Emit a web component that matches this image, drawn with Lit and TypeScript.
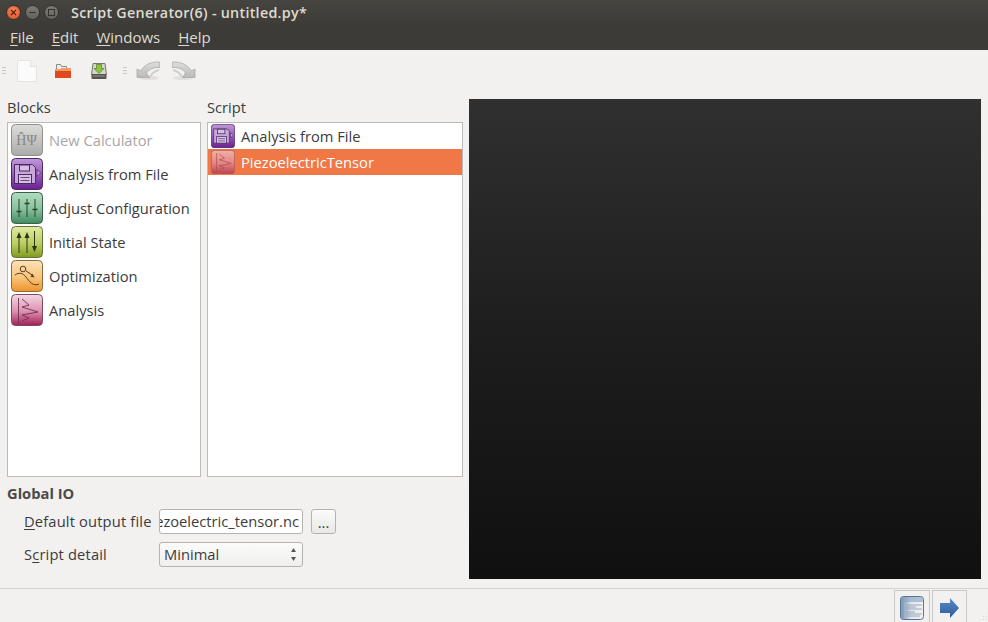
import { LitElement, html, css, svg } from "lit";
import { customElement } from "lit/decorators.js";

type Kind = "calc" | "file" | "adjust" | "init" | "opt" | "analysis";

const glyphs: Record<Kind, unknown> = {
  calc: svg`<text x="15.500" y="21" text-anchor="middle" class="calc-text">ĤΨ</text>`,
  file: svg`<g fill="none" stroke="#4b2a63" stroke-width="1"><path d="M3.500 6.500h18l3 3v16h-21z" fill="#c7a6dc"/><rect x="8.500" y="7" width="10" height="6" fill="#d6c0e4"/><rect x="7.500" y="16.500" width="13" height="9" fill="#d6c0e4"/><path d="M9.500 19.500h9M9.500 22.500h9" stroke-width=".8"/><path d="M26 11.500l3.500 3.500-3.500 3.500z" fill="#c8a8dc" stroke-width=".8"/></g>`,
  adjust: svg`<g fill="none" stroke="#24432f" stroke-width="1"><path d="M8 7v18M16 7v18M24 7v18"/><path d="M5.500 19.500h5M13.500 11.500h5M21.500 17.500h5" stroke-width="1.600"/></g>`,
  init: svg`<g fill="#2a3410" stroke="#2a3410" stroke-width="1"><path d="M8 27V10M16 27V10M23.500 5v17" fill="none"/><path d="M8 6l-2.500 6h5zM16 6l-2.500 6h5zM23.500 26l-2.500-6h5z" stroke="none"/></g>`,
  opt: svg`<g fill="none" stroke="#5a3c18" stroke-width="1"><path d="M4 15c4-3 8-2 11 2s7 10 13 7"/><circle cx="12" cy="9" r="2.800" fill="#f8d09a"/><path d="M15 11l7 4.500"/><path d="M23.500 17.500l-4-.8 2-3z" fill="#5a3c18" stroke="none"/></g>`,
  analysis: svg`<g fill="none" stroke="#6b3350" stroke-width=".9"><path d="M7.500 4v25"/><path d="M11 5l7 6-7 2 16 5-16 3 7 3-7 3"/></g>`,
};

const tile = (kind: Kind, faded = false) => html`
  <svg class="tile ${kind} ${faded ? "faded" : ""}" viewBox="0 0 32 32">
    <defs>
      <linearGradient id="g-${kind}" x1="0" y1="0" x2="0" y2="1">
        <stop offset="0" stop-color="var(--top)" />
        <stop offset="0.55" stop-color="var(--mid)" />
        <stop offset="1" stop-color="var(--bot)" />
      </linearGradient>
    </defs>
    <rect x="0.500" y="0.500" width="31" height="31" rx="4" fill="url(#g-${kind})" stroke="var(--edge)" />
    ${glyphs[kind]}
  </svg>
`;

const blocks: [Kind, string][] = [
  ["calc", "New Calculator"],
  ["file", "Analysis from File"],
  ["adjust", "Adjust Configuration"],
  ["init", "Initial State"],
  ["opt", "Optimization"],
  ["analysis", "Analysis"],
];

@customElement("app-root")
export class AppRoot extends LitElement {
  static styles = css`
    :host {
      display: flex;
      flex-direction: column;
      position: relative;
      width: 988px;
      height: 622px;
      overflow: hidden;
      background: #f2f1f0;
      color: #3c3c3c;
      font-family: "Open Sans", "Noto Sans", sans-serif;
      font-size: 14.7px;
    }
    .titlebar {
      height: 24px;
      padding-bottom: 3px;
      flex: none;
      display: flex;
      align-items: center;
      padding-left: 6px;
      background: linear-gradient(#45443f, #3c3b37);
      color: #dfdbd2;
      font-weight: 600;
      font-size: 14.3px;
      letter-spacing: 0.28px;
    }
    .winbtns { display: flex; gap: 4px; width: 65px; }
    .winbtn {
      width: 15px; height: 15px; border-radius: 50%; box-sizing: border-box;
      background: linear-gradient(#7d7c74, #63625c);
      border: 1px solid #33322e;
      display: flex; align-items: center; justify-content: center;
    }
    .winbtn.close { background: radial-gradient(circle at 50% 35%, #f58a5c, #dd4a21); }
    .winbtn svg { display: block; }
    .menubar {
      height: 23px;
      padding-bottom: 3px;
      box-sizing: border-box;
      flex: none;
      display: flex;
      gap: 18px;
      padding-left: 10px;
      align-items: center;
      background: #3c3b37;
      color: #dfdbd2;
      font-size: 15px;
    }
    u { text-underline-offset: 2px; }
    .toolbar {
      height: 41px;
      flex: none;
      display: flex;
      align-items: center;
      padding-left: 2px;
    }
    .grip {
      width: 4px;
      height: 7px;
      background: repeating-linear-gradient(#c8c7c4 0 1px, transparent 1px 3px);
    }
    .tool { display: block; flex: none; }
    .t-new { margin-left: 11px; }
    .t-open { margin-left: 18px; }
    .t-save { margin-left: 20px; }
    .grip2 { margin-left: 16px; }
    .t-undo { margin-left: 9px; }
    .t-redo { margin-left: 12px; }
    .main {
      flex: 1;
      min-height: 0;
      display: flex;
      padding: 8px 7px 9px 7px;
      gap: 6px;
    }
    .left { width: 456px; flex: none; display: flex; flex-direction: column; }
    .lists { display: grid; grid-template-columns: 194px 256px; gap: 6px; height: 378px; flex: none; }
    .col { display: flex; flex-direction: column; min-height: 0; }
    .col-label { height: 23px; flex: none; line-height: 16px; }
    .list {
      flex: 1;
      background: #fff;
      border: 1px solid #bdbbb7;
      color: #3c3c3c;
    }
    .block { height: 34px; display: flex; align-items: center; gap: 6px; padding-left: 3px; }
    .block .tile { width: 32px; height: 32px; }
    .block.off { color: #a9a7a5; }
    .script-row { height: 26px; display: flex; align-items: center; gap: 6px; padding-left: 3px; overflow: hidden; }
    .script-row.sel { background: #f07746; color: #fff; }
    .script-row .tile { width: 24px; height: 24px; }
    .tile { flex: none; display: block; }
    .tile.faded { opacity: 0.6; }
    .calc { --top: #dcdcda; --mid: #c2c2c0; --bot: #aaaaa8; --edge: #8e8e8c; }
    .calc-text { font: 14px "Liberation Serif", serif; fill: #858583; }
    .file { --top: #c09ad9; --mid: #9457b8; --bot: #6a1f92; --edge: #4a2a60; }
    .adjust { --top: #b2dcc0; --mid: #86c09b; --bot: #3f8a5e; --edge: #3b5d49; }
    .init { --top: #e2eba2; --mid: #bbce64; --bot: #7f9a1e; --edge: #66723a; }
    .opt { --top: #fce2b8; --mid: #f8c47c; --bot: #ee9427; --edge: #8a6a40; }
    .analysis { --top: #f3d8e3; --mid: #dd8fb0; --bot: #a01f55; --edge: #7c4a60; }
    .global { flex: 1; }
    .global-title { font-weight: 700; margin-top: 8px; line-height: 17px; color: #4a4a4a; }
    .form {
      display: grid;
      grid-template-columns: 127px 144px auto;
      column-gap: 8px;
      row-gap: 8px;
      padding-left: 17px;
      margin-top: 7px;
      align-items: center;
      justify-content: start;
    }
    .form-label { white-space: nowrap; padding-bottom: 2px; letter-spacing: 0.16px; }
    .field {
      height: 25px;
      box-sizing: border-box;
      border: 1px solid #b5b3af;
      border-radius: 3px;
      background: #fff;
      display: flex;
      align-items: center;
      overflow: hidden;
      color: #3c3c3c;
      padding-bottom: 2px;
    }
    .field.text { justify-content: flex-end; padding-right: 3px; white-space: nowrap; }
    .field.combo {
      background: linear-gradient(#fbfbfa, #f0efee);
      justify-content: space-between;
      padding: 0 6px 2px 4px;
    }
    .field.combo svg { margin-top: 2px; }
    .more {
      width: 25px; height: 25px; box-sizing: border-box;
      border: 1px solid #b5b3af; border-radius: 3px;
      background: linear-gradient(#fbfbfa, #e9e8e6);
      font: inherit; padding: 0; color: #3c3c3c; line-height: 22px;
    }
    .canvas {
      flex: 1;
      background: linear-gradient(#2f302f, #1d1d1d 50%, #101010);
    }
    .footer {
      height: 34px;
      box-sizing: border-box;
      flex: none;
      border-top: 1px solid #d4d3d0;
      display: flex;
      justify-content: flex-end;
      gap: 2px;
      padding: 1px 21px 0 0;
    }
    .fbtn {
      width: 36px; height: 32px; box-sizing: border-box;
      border: 1px solid #c9c8c5; border-bottom: 0;
      display: flex; align-items: center; justify-content: center; padding: 2px 0 0;
    }
    .fbtn + .fbtn { width: 35px; }
    .resize { position: absolute; right: 0; bottom: 0; display: block; }
  `;

  render() {
    return html`
      <header class="titlebar">
        <div class="winbtns">
          <div class="winbtn close"><svg width="7" height="7" viewBox="0 0 7 7"><path d="M1 1l5 5M6 1L1 6" stroke="#5a1c08" stroke-width="1.200"/></svg></div>
          <div class="winbtn"><svg width="7" height="7" viewBox="0 0 7 7"><path d="M0.500 3.500h6" stroke="#33322f" stroke-width="1.200"/></svg></div>
          <div class="winbtn"><svg width="7" height="7" viewBox="0 0 7 7"><rect x="0.500" y="0.500" width="6" height="6" fill="none" stroke="#33322f"/></svg></div>
        </div>
        <span>Script Generator(6) - untitled.py*</span>
      </header>
      <nav class="menubar">
        <span><u>F</u>ile</span><span><u>E</u>dit</span><span><u>W</u>indows</span><span><u>H</u>elp</span>
      </nav>
      <div class="toolbar">
        <div class="grip"></div>
        <svg class="tool t-new" width="20" height="22" viewBox="0 0 20 22">
          <path d="M.500.500h13l6 6v15H.500z" fill="#fbfbfb" stroke="#e4e3e1"/><path d="M13.500.500v6h6" fill="#f0f0ee" stroke="#e4e3e1"/>
        </svg>
        <svg class="tool t-open" width="16" height="14" viewBox="0 0 16 14">
          <path d="M1.500.500h4l1 2h5v5h-10z" fill="#eeeeec" stroke="#8a8a88"/>
          <path d="M0 5h6l1-1h9v10H0z" fill="#e0481f"/><path d="M0 5h6l1-1h9v3H0z" fill="#f59a62"/>
        </svg>
        <svg class="tool t-save" width="16" height="16" viewBox="0 0 16 16">
          <path d="M2 .500h12l1.500 11H.500z" fill="#d4d5cf" stroke="#77776f"/>
          <path d="M5.500 1.500h5v4h2.500L8 10.500 3 5.500h2.500z" fill="#8cc63e" stroke="#55801c" stroke-width=".7"/>
          <rect x="0.500" y="11" width="15" height="5" rx="1" fill="#55554f"/><path d="M2 13h12" stroke="#9a9a94"/>
        </svg>
        <div class="grip grip2"></div>
        <svg class="tool t-undo" width="24" height="19" viewBox="0 0 24 19">
          <defs><linearGradient id="ug" x1="0" y1="0" x2="0" y2="1"><stop offset="0" stop-color="#dededc"/><stop offset="1" stop-color="#b9b9b7"/></linearGradient></defs>
          <ellipse cx="13" cy="17" rx="10" ry="2" fill="#e1e0de"/>
          <path d="M1 8l4 2C7 5 14 .500 23.500 1l.5 5.500c-6-.500-11 1.500-13.500 5.500l3 4.500L1 16.500z" fill="url(#ug)" stroke="#a9a9a7" stroke-width=".8"/>
          <path d="M14 16c2-4 5-6 9-7" fill="none" stroke="#cfcfcd" stroke-width="2"/>
        </svg>
        <svg class="tool t-redo" width="24" height="19" viewBox="0 0 24 19">
          <ellipse cx="11" cy="17" rx="10" ry="2" fill="#e1e0de"/>
          <path d="M23 8l-4 2C17 5 10 .500 .500 1L0 6.500c6-.500 11 1.500 13.500 5.500l-3 4.500L23 16.500z" fill="url(#ug)" stroke="#a9a9a7" stroke-width=".8"/>
          <path d="M10 16c-2-4-5-6-9-7" fill="none" stroke="#cfcfcd" stroke-width="2"/>
        </svg>
      </div>
      <div class="main">
        <div class="left">
          <div class="lists">
            <section class="col">
              <div class="col-label">Blocks</div>
              <div class="list">
                ${blocks.map(([k, label]) => html`<div class="block ${k === "calc" ? "off" : ""}">${tile(k)}<span>${label}</span></div>`)}
              </div>
            </section>
            <section class="col">
              <div class="col-label">Script</div>
              <div class="list">
                <div class="script-row">${tile("file")}<span>Analysis from File</span></div>
                <div class="script-row sel">${tile("analysis", true)}<span>PiezoelectricTensor</span></div>
              </div>
            </section>
          </div>
          <section class="global">
            <div class="global-title">Global IO</div>
            <div class="form">
              <span class="form-label"><u>D</u>efault output file</span>
              <div class="field text">piezoelectric_tensor.nc</div>
              <button class="more">...</button>
              <span class="form-label">S<u>c</u>ript detail</span>
              <div class="field combo">
                <span>Minimal</span>
                <svg width="5" height="13" viewBox="0 0 5 13"><path d="M2.500 0L5 4H0zM2.500 13L0 9h5z" fill="#555"/></svg>
              </div>
            </div>
          </section>
        </div>
        <div class="canvas"></div>
      </div>
      <footer class="footer">
        <div class="fbtn">
          <svg width="24" height="24" viewBox="0 0 24 24">
            <defs><linearGradient id="dg" x1="0" y1="0" x2="1" y2="0"><stop offset="0" stop-color="#6f8fb0"/><stop offset=".45" stop-color="#dfe6ee"/><stop offset="1" stop-color="#f1f3f5"/></linearGradient></defs>
            <rect x="0.500" y="0.500" width="23" height="23" rx="3" fill="url(#dg)" stroke="#5a7494"/>
            <path d="M1 1h22v5H8L4 7v16H1z" fill="#86a0bc" opacity=".6"/>
            <path d="M6 9h16M6 11h10M6 13h16M6 16h9M6 18h16M6 20h14" stroke="#8d98a3" stroke-width=".8"/>
          </svg>
        </div>
        <div class="fbtn">
          <svg width="19" height="20" viewBox="0 0 19 20">
            <defs><linearGradient id="ag" x1="0" y1="0" x2="0" y2="1"><stop offset="0" stop-color="#5c8bc8"/><stop offset="1" stop-color="#2c5a9c"/></linearGradient></defs>
            <path d="M0 5h10V0l9 10-9 10v-5H0z" fill="url(#ag)"/>
          </svg>
        </div>
      </footer>
      <svg class="resize" width="11" height="9" viewBox="0 0 11 9" fill="#d9d8d5">
        <rect x="9" y="0" width="1" height="1"/><rect x="6" y="3" width="1" height="1"/><rect x="9" y="3" width="1" height="1"/>
        <rect x="3" y="6" width="1" height="1"/><rect x="6" y="6" width="1" height="1"/><rect x="9" y="6" width="1" height="1"/>
      </svg>
    `;
  }
}
